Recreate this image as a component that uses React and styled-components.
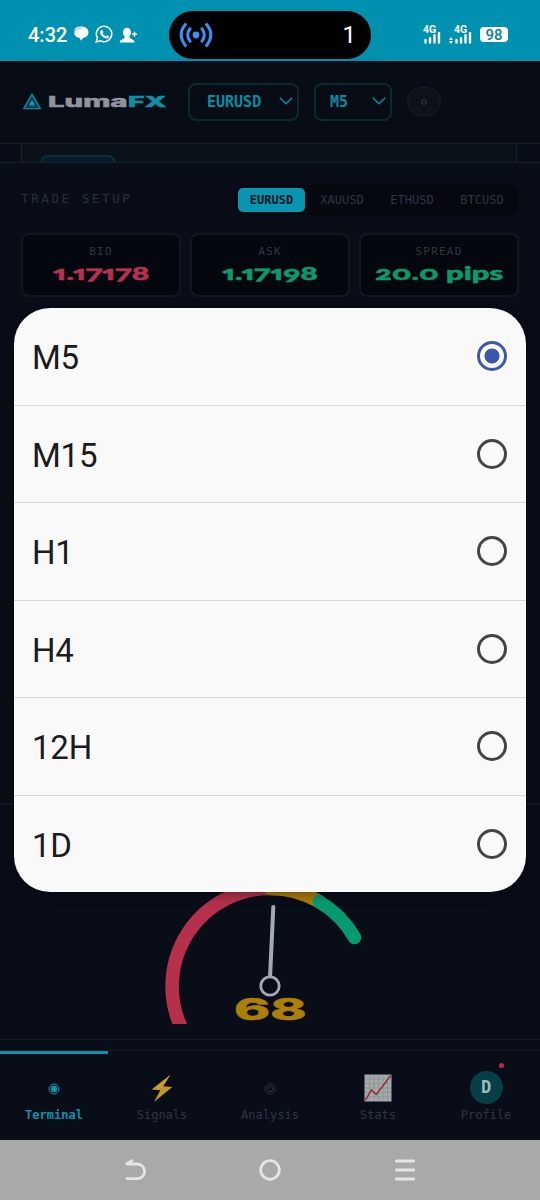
import React, { useLayoutEffect, useRef, useState } from "react";
import styled, { createGlobalStyle } from "styled-components";

const PAIRS = ["EURUSD", "XAUUSD", "ETHUSD", "BTCUSD"];
const TIMEFRAMES = ["M5", "M15", "H1", "H4", "12H", "1D"];

// Stretches a run of text horizontally until it fills the given width
const WideText = ({ width, children, ...rest }) => {
  const ref = useRef(null);
  const [scale, setScale] = useState(1);

  useLayoutEffect(() => {
    setScale(width / ref.current.offsetWidth);
  }, [width]);

  return (
    <WideBox $width={width} {...rest}>
      <WideInner ref={ref} style={{ transform: `scaleX(${scale})` }}>
        {children}
      </WideInner>
    </WideBox>
  );
};

const StatusBar = () => (
  <Status>
    <Clock>4:32</Clock>
    <StatusIcons width="66" height="20" viewBox="0 0 66 20">
      <path
        d="M2 3.5Q4 1 9 1.5Q15 2 15.5 7Q15.5 12 10 13L8 15.8L6.7 13Q1 12 1 7Z"
        fill="#fff"
      />
      <path d="M1.6 8Q1.5 3.2 8.5 3" stroke="#0090b0" strokeWidth=".6" fill="none" />
      <path
        d="M23.2 16.9L24.4 12.8A7.7 7.7 0 1 1 27.6 15.8Z"
        fill="none"
        stroke="#fff"
        strokeWidth="1.5"
      />
      <path
        d="M28 5.3Q29.3 4.5 30 6L30.4 7.3L29.5 8.4Q30.8 10.6 33 11.3L34.1 10.2L36.2 11.2Q36 13.5 33.5 13.4Q27.5 12.3 27.1 7Q27.1 6 28 5.3Z"
        fill="#fff"
      />
      <path
        d="M50 8Q50 2.7 54 2.7Q58 2.7 58 8Q57.6 10.7 56.2 12Q56.3 13.6 59 14.2Q61.5 15 61.8 17.5H46.5Q46.7 15 49.5 14.2Q51.8 13.6 51.8 12Q50.2 10.7 50 8Z"
        fill="#fff"
      />
      <path d="M59 9.2H64M61.5 6.7V11.7" stroke="#fff" strokeWidth="1.4" />
    </StatusIcons>
    <Island>
      <svg width="34" height="26" viewBox="0 0 34 26">
        <g fill="none" stroke="#3d8df5" strokeWidth="3">
          <path d="M7.2 1.5Q-2.8 12.5 7.2 24.5M26.8 1.5Q36.8 12.5 26.8 24.5" />
          <path d="M11.7 5.7Q5.7 12.8 11.7 20.3M22.3 5.7Q28.3 12.8 22.3 20.3" />
        </g>
        <circle cx="17" cy="13" r="3.4" fill="#3d8df5" />
      </svg>
      <span>1</span>
    </Island>
    <Signals>
      <Signal>
        <b>4G</b>
        <svg width="18" height="12" viewBox="0 0 18 12">
          <path
            d="M2.5 10.5V8M7 10.5V6.2M11.5 10.5V3.2M16 10.5V1"
            stroke="#fff"
            strokeWidth="2.4"
            strokeLinecap="round"
          />
        </svg>
      </Signal>
      <Signal $wide>
        <b>4G</b>
        <svg width="24" height="12" viewBox="0 0 24 12">
          <path
            d="M8.5 10.5V8M13 10.5V6.2M17.5 10.5V3.2M22 10.5V1"
            stroke="#fff"
            strokeWidth="2.4"
            strokeLinecap="round"
          />
          <path d="M1 8L3 5L5 8ZM1 9L3 12L5 9Z" fill="#fff" />
        </svg>
      </Signal>
      <Battery>98</Battery>
    </Signals>
  </Status>
);

const Chevron = () => (
  <svg width="14" height="9" viewBox="0 0 14 9">
    <path d="M.8 .8L7 6.8L13.2 .8" fill="none" stroke="#0a8da5" strokeWidth="1.4" />
  </svg>
);

const Header = () => (
  <TopBar>
    <svg width="20" height="18" viewBox="0 0 20 18">
      <path d="M10 1.5L18 15.5H2Z" fill="#06313f" stroke="#0a8399" strokeWidth="1.7" />
      <path d="M10 6.5L13.8 13.2H6.2Z" fill="#0a6e98" />
      <circle cx="10" cy="10.3" r="1.8" fill="#1c9fae" />
    </svg>
    <Logo>
      <WideText width={80}>Luma</WideText>
      <WideText width={38}>
        <em>FX</em>
      </WideText>
    </Logo>
    <Select $width={111}>
      EURUSD <Chevron />
    </Select>
    <Select $width={78} $tight>
      M5 <Chevron />
    </Select>
    <RoundButton>
      <svg width="8" height="8" viewBox="0 0 8 8">
        <circle cx="4" cy="4" r="2.3" fill="none" stroke="#3a4048" />
      </svg>
    </RoundButton>
  </TopBar>
);

const Gauge = () => (
  <GaugeBox>
    <svg width="220" height="134" viewBox="160 890 220 134">
      <g fill="none" strokeWidth="13.5">
        <path
          d="M179.9 1024.5A97.7 97.7 0 0 1 270 888.5"
          stroke="#b5314b"
          strokeLinecap="square"
        />
        <path
          d="M270 888.5A97.5 97.5 0 0 1 319 901.5"
          stroke="#ac7c08"
          strokeLinecap="round"
        />
        <path
          d="M319 901.5A97.5 97.5 0 0 1 354.5 937.5"
          stroke="#079a70"
          strokeLinecap="round"
        />
      </g>
      <path d="M270 978L273.3 907" stroke="#a4aab5" strokeWidth="4" strokeLinecap="round" />
      <circle cx="270" cy="986" r="9.2" fill="#090c17" stroke="#a4aab5" strokeWidth="2.8" />
    </svg>
    <Score>
      <WideText width={73}>68</WideText>
    </Score>
  </GaugeBox>
);

const TerminalIcon = () => (
  <svg width="14" height="14" viewBox="0 0 14 14">
    <circle cx="7" cy="8" r="5" fill="none" stroke="#0a93ad" />
    <circle cx="7" cy="8" r="3.3" fill="#0a93ad" />
  </svg>
);

const BoltIcon = () => (
  <svg width="22" height="28" viewBox="0 0 22 28">
    <path d="M19.4 .7L.6 15.6L9.3 16.3L3 28L21.3 13L12.3 12.3Z" fill="#c2952a" />
    <path d="M19.4 .7L9.5 14.4L2 15.2Z" fill="#d1a738" opacity=".5" />
  </svg>
);

const AnalysisIcon = () => (
  <svg width="14" height="14" viewBox="0 0 14 14">
    <g fill="none" stroke="#2f3542">
      <circle cx="7" cy="8" r="5" />
      <circle cx="7" cy="8" r="2.7" />
    </g>
  </svg>
);

const StatsIcon = () => (
  <svg width="28" height="28" viewBox="0 0 28 28">
    <rect x=".5" y=".5" width="27" height="27" fill="#a3aaa9" />
    <path
      d="M5.5 1V27M10 1V27M14.5 1V27M19 1V27M23.5 1V27M1 5H27M1 9.5H27M1 14H27M1 18.5H27M1 23H27"
      stroke="#84908f"
      strokeWidth=".7"
    />
    <path d="M1.3 26.5L7.3 16L12.3 20.5L27 1.3" fill="none" stroke="#9c2836" strokeWidth="1.5" />
  </svg>
);

const BottomNav = () => (
  <Nav>
    <NavItem $active>
      <NavIcon>
        <TerminalIcon />
      </NavIcon>
      Terminal
    </NavItem>
    <NavItem>
      <NavIcon>
        <BoltIcon />
      </NavIcon>
      Signals
    </NavItem>
    <NavItem>
      <NavIcon>
        <AnalysisIcon />
      </NavIcon>
      Analysis
    </NavItem>
    <NavItem>
      <NavIcon>
        <StatsIcon />
      </NavIcon>
      Stats
    </NavItem>
    <NavItem>
      <NavIcon>
        <Avatar>D</Avatar>
      </NavIcon>
      Profile
      <Dot />
    </NavItem>
  </Nav>
);

const SystemNav = () => (
  <SystemBar>
    <svg width="24" height="26" viewBox="0 0 24 26">
      <path d="M4 7H14.3A7.3 7.3 0 0 1 14.3 21.6H4" />
      <path d="M4 6.8L9 3.6" />
    </svg>
    <svg width="24" height="26" viewBox="0 0 24 26">
      <circle cx="12" cy="13" r="9.3" />
    </svg>
    <svg width="24" height="26" viewBox="0 0 24 26">
      <path d="M3.3 4H20.7M3.3 13H20.7M3.3 22H20.7" />
    </svg>
  </SystemBar>
);

const App = () => {
  const [timeframe, setTimeframe] = useState("M5");

  return (
    <Screen>
      <GlobalStyle />
      <StatusBar />
      <Header />
      <ChartStrip>
        <ChartPanel>
          <ChartTab />
        </ChartPanel>
      </ChartStrip>

      <Setup>
        <SetupHead>
          <Title>TRADE SETUP</Title>
          <Pairs>
            {PAIRS.map((pair) => (
              <Pair key={pair} $active={pair === "EURUSD"}>
                {pair}
              </Pair>
            ))}
          </Pairs>
        </SetupHead>
        <Quotes>
          <Quote $color="#b5314f">
            <small>BID</small>
            <WideText width={96}>1.17178</WideText>
          </Quote>
          <Quote $color="#0a9a6c">
            <small>ASK</small>
            <WideText width={96}>1.17198</WideText>
          </Quote>
          <Quote $color="#0a9a6c">
            <small>SPREAD</small>
            <WideText width={129}>20.0 pips</WideText>
          </Quote>
        </Quotes>
      </Setup>

      <Gauge />
      <BottomNav />
      <SystemNav />

      <Dialog>
        {TIMEFRAMES.map((item) => (
          <Option key={item} onClick={() => setTimeframe(item)}>
            <span>{item}</span>
            <Radio $checked={item === timeframe} />
          </Option>
        ))}
      </Dialog>
    </Screen>
  );
};

export default App;

const mono = `"DejaVu Sans Mono", monospace`;

const GlobalStyle = createGlobalStyle`
  * {
    box-sizing: border-box;
  }

  body {
    margin: 0;
    background: #090d18;
  }

  svg {
    display: block;
    flex-shrink: 0;
  }
`;

const Screen = styled.div`
  position: relative;
  display: flex;
  flex-direction: column;
  width: 540px;
  height: 1200px;
  overflow: hidden;
  background: #090d18;
  font-family: Roboto, sans-serif;
`;

const WideBox = styled.span`
  display: block;
  width: ${(props) => props.$width}px;
`;

const WideInner = styled.span`
  display: inline-block;
  white-space: pre;
  transform-origin: left center;
  -webkit-text-stroke: 0.5px currentColor;
`;

const Status = styled.header`
  display: flex;
  align-items: center;
  height: 61px;
  padding: 9px 28px 0;
  background: #0090b0;
  color: #fff;
`;

const Clock = styled.span`
  width: 45px;
  font-size: 20px;
  font-weight: 500;
  line-height: 24px;
`;

const StatusIcons = styled.svg`
  width: 66px;
`;

const Island = styled.div`
  display: flex;
  align-items: center;
  justify-content: space-between;
  width: 202px;
  height: 48px;
  margin-left: 30px;
  padding: 0 15px 0 10px;
  border-radius: 24px;
  background: #000;
  font-size: 24px;
`;

const Signals = styled.div`
  display: flex;
  align-items: flex-end;
  height: 18px;
  margin-left: 51px;
`;

const Signal = styled.div`
  display: flex;
  flex-direction: column;
  align-items: flex-end;
  width: ${(props) => (props.$wide ? 24 : 19)}px;
  margin-right: ${(props) => (props.$wide ? 8 : 7)}px;

  b {
    width: 18px;
    margin-bottom: -2px;
    font-size: 10.5px;
    font-weight: 700;
    line-height: 9px;
  }
`;

const Battery = styled.div`
  width: 28px;
  height: 15px;
  margin-bottom: 2px;
  border-radius: 4px;
  background: #fff;
  color: #0a7f9b;
  font-size: 15px;
  font-weight: 500;
  line-height: 16px;
  text-align: center;
`;

const TopBar = styled.div`
  display: flex;
  align-items: center;
  height: 82px;
  padding: 0 0 1px 22px;
  background: #080c14;
`;

const Logo = styled.div`
  display: flex;
  width: 118px;
  margin: 0 22px 0 6px;
  color: #92939d;
  font-family: Inter, sans-serif;
  font-size: 15px;
  font-weight: 800;
  line-height: 18px;

  em {
    color: #0a91a8;
    font-style: normal;
  }
`;

const Select = styled.div`
  display: flex;
  align-items: center;
  justify-content: space-between;
  width: ${(props) => props.$width}px;
  height: 38px;
  margin-right: 15px;
  padding: 0 4px 0 ${(props) => (props.$tight ? 14 : 17)}px;
  border: 2px solid #0a2a31;
  border-radius: 8px;
  color: #078ca5;
  font: 700 15px ${mono};
`;

const RoundButton = styled.div`
  display: flex;
  align-items: center;
  justify-content: center;
  width: 34px;
  height: 29px;
  border: 1px solid #181d24;
  border-radius: 15px;
  background: #0d1118;
`;

const ChartStrip = styled.div`
  height: 20px;
  padding: 0 23px 0 21px;
  border-top: 1px solid #131b26;
  border-bottom: 1px solid #142230;
`;

const ChartPanel = styled.div`
  height: 18px;
  padding: 11px 0 0 18px;
  overflow: hidden;
  border-left: 1px solid #182029;
  border-right: 1px solid #182029;
  background: #0a1119;
`;

const ChartTab = styled.div`
  width: 76px;
  height: 20px;
  border: 2px solid #08303a;
  border-radius: 8px;
  background: #071c26;
`;

const Setup = styled.section`
  height: 642px;
  padding: 21px 21px 0;
  border-bottom: 2px solid #111723;
`;

const SetupHead = styled.div`
  display: flex;
  align-items: center;
  justify-content: space-between;
  height: 31px;
`;

const Title = styled.h2`
  margin: -2px 0 0;
  color: #283040;
  font: 400 12.5px ${mono};
  letter-spacing: 2.6px;
`;

const Pairs = styled.div`
  display: flex;
  padding: 3px 2px 3px 3px;
  border-radius: 8px;
  background: #05080f;
`;

const Pair = styled.span`
  width: ${(props) => (props.$active ? 67 : 70)}px;
  height: 24px;
  margin-right: ${(props) => (props.$active ? 2 : 0)}px;
  border-radius: 5px;
  background: ${(props) => (props.$active ? "#0795b2" : "transparent")};
  color: ${(props) => (props.$active ? "#03111b" : "#2e3543")};
  font: ${(props) => (props.$active ? 700 : 400)} 12px/24px ${mono};
  text-align: center;
`;

const Quotes = styled.div`
  display: grid;
  grid-template-columns: repeat(3, 1fr);
  gap: 9px;
  margin-top: 18px;
`;

const Quote = styled.div`
  display: flex;
  flex-direction: column;
  align-items: center;
  height: 64px;
  padding-top: 10px;
  border: 2px solid #111721;
  border-radius: 8px;
  background: #04070e;
  color: ${(props) => props.$color};
  font-family: Lato, sans-serif;
  font-size: 18px;
  font-weight: 900;
  font-variant-numeric: oldstyle-nums proportional-nums;
  line-height: 20px;

  small {
    margin-bottom: 4px;
    color: #2f3644;
    font: 400 11px/14px ${mono};
    letter-spacing: 1.2px;
  }
`;

const GaugeBox = styled.section`
  position: relative;
  display: flex;
  flex-direction: column;
  align-items: center;
  height: 235px;
  padding-top: 85px;
  border-bottom: 1px solid #151b2b;
`;

const Score = styled.div`
  position: absolute;
  top: 184px;
  color: #ac7f08;
  font-family: Inter, sans-serif;
  font-size: 30px;
  font-weight: 800;
  line-height: 40px;
`;

const Nav = styled.nav`
  display: flex;
  height: 90px;
  margin-top: 10px;
  border-top: 1px solid #131a29;
`;

const NavItem = styled.a`
  position: relative;
  flex: 1;
  display: flex;
  flex-direction: column;
  align-items: center;
  gap: 2px;
  padding-top: 16px;
  border-top: 3px solid ${(props) => (props.$active ? "#0a93a8" : "transparent")};
  color: ${(props) => (props.$active ? "#0a93ad" : "#2e3543")};
  font: ${(props) => (props.$active ? 700 : 400)} 12px/16px ${mono};
`;

const NavIcon = styled.span`
  display: flex;
  align-items: center;
  justify-content: center;
  height: 35px;
`;

const Avatar = styled.span`
  width: 33px;
  height: 33px;
  border-radius: 50%;
  background: #073f47;
  color: #a4b8bd;
  font: 700 17px/33px ${mono};
  text-align: center;
`;

const Dot = styled.i`
  position: absolute;
  top: 9px;
  right: 36px;
  width: 5px;
  height: 5px;
  border-radius: 50%;
  background: #b62c4b;
`;

const SystemBar = styled.footer`
  display: flex;
  align-items: center;
  justify-content: center;
  gap: 111px;
  height: 60px;
  background: #a9a9a9;

  svg {
    fill: none;
    stroke: #e5e5e5;
    stroke-width: 2.8;
    stroke-linecap: round;
  }
`;

const Dialog = styled.div`
  position: absolute;
  top: 308px;
  left: 14px;
  width: 512px;
  overflow: hidden;
  border-radius: 36px;
  background: #f9f9f9;
  box-shadow: 0 2px 12px rgba(0, 0, 0, 0.4);
`;

const Option = styled.div`
  display: flex;
  align-items: center;
  justify-content: space-between;
  height: 97.5px;
  padding: 0 19px 0 18px;
  color: #1b1b1b;
  font-size: 33px;
  letter-spacing: -0.2px;
  cursor: pointer;

  span:first-child {
    padding-top: 3px;
  }

  & + & {
    border-top: 1.5px solid #d6d6d6;
  }

  &:first-child {
    height: 96.5px;
  }

  &:last-child {
    height: 97px;
  }
`;

const Radio = styled.span`
  width: 30px;
  height: 30px;
  border: 3px solid ${(props) => (props.$checked ? "#3b59a8" : "#444")};
  border-radius: 50%;
  background: ${(props) =>
    props.$checked ? "radial-gradient(circle, #3b59a8 7.2px, transparent 7.8px)" : "none"};
`;
